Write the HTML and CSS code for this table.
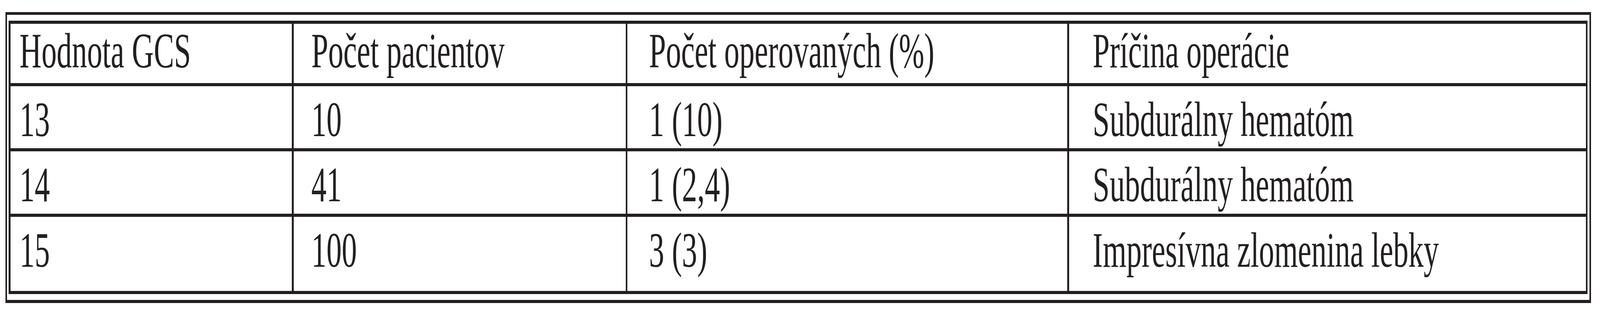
FILE: index.html
```html
<!DOCTYPE html>
<html lang="sk">
<head>
<meta charset="utf-8">
<title>Tabuľka GCS</title>
<link rel="stylesheet" href="styles.css">
</head>
<body>
<div class="page">
  <div class="frame">
    <div class="grid">
      <div class="cell head c1"><span class="txt">Hodnota GCS</span></div>
      <div class="cell head c2"><span class="txt">Počet pacientov</span></div>
      <div class="cell head c3"><span class="txt">Počet operovaných (%)</span></div>
      <div class="cell head c4"><span class="txt">Príčina operácie</span></div>

      <div class="cell body c1"><span class="txt">13</span></div>
      <div class="cell body c2"><span class="txt">10</span></div>
      <div class="cell body c3"><span class="txt">1 (10)</span></div>
      <div class="cell body c4"><span class="txt">Subdurálny hematóm</span></div>

      <div class="cell body c1"><span class="txt">14</span></div>
      <div class="cell body c2"><span class="txt">41</span></div>
      <div class="cell body c3"><span class="txt">1 (2,4)</span></div>
      <div class="cell body c4"><span class="txt">Subdurálny hematóm</span></div>

      <div class="cell body c1"><span class="txt">15</span></div>
      <div class="cell body c2"><span class="txt">100</span></div>
      <div class="cell body c3"><span class="txt">3 (3)</span></div>
      <div class="cell body c4"><span class="txt">Impresívna zlomenina lebky</span></div>
    </div>
  </div>
</div>
</body>
</html>
```
FILE: styles.css
```css
:root {
  /* horizontal fit factor: 6682px design width into the viewport */
  --sx: 0.61299;
  --ink: #231f20;
}

html, body {
  margin: 0;
  padding: 0;
  background: #ffffff;
}

body {
  font-family: "Liberation Serif", "Times New Roman", serif;
  color: var(--ink);
}

.page {
  padding: 31px 0 0 calc(23px * var(--sx));
}

.frame {
  box-sizing: border-box;
  width: calc(6621px * var(--sx));
  border-style: solid;
  border-color: var(--ink);
  border-width: 7px calc(8px * var(--sx)) 8px;
  padding: 15px calc(7px * var(--sx));
}

.grid {
  display: grid;
  background: var(--ink);
  padding: 8px calc(8px * var(--sx));
  row-gap: 8px;
  column-gap: calc(8px * var(--sx));
  grid-template-columns: 1173fr 1386fr 1836fr 2156fr;
  grid-template-rows: 152px 159px 160px 190px;
}

.cell {
  background: #ffffff;
  white-space: nowrap;
}

.txt {
  display: inline-block;
  font-size: calc(127px * var(--sx));
  line-height: 1;
  transform: scaleY(calc(1 / var(--sx)));
  transform-origin: 0 0;
}

.head {
  padding-top: 8px;
}

.body {
  padding-top: 24px;
}

.c1 { padding-left: calc(37px * var(--sx)); }
.c2 { padding-left: calc(74px * var(--sx)); }
.c3 { padding-left: calc(90px * var(--sx)); }
.c4 { padding-left: calc(98px * var(--sx)); }
```
